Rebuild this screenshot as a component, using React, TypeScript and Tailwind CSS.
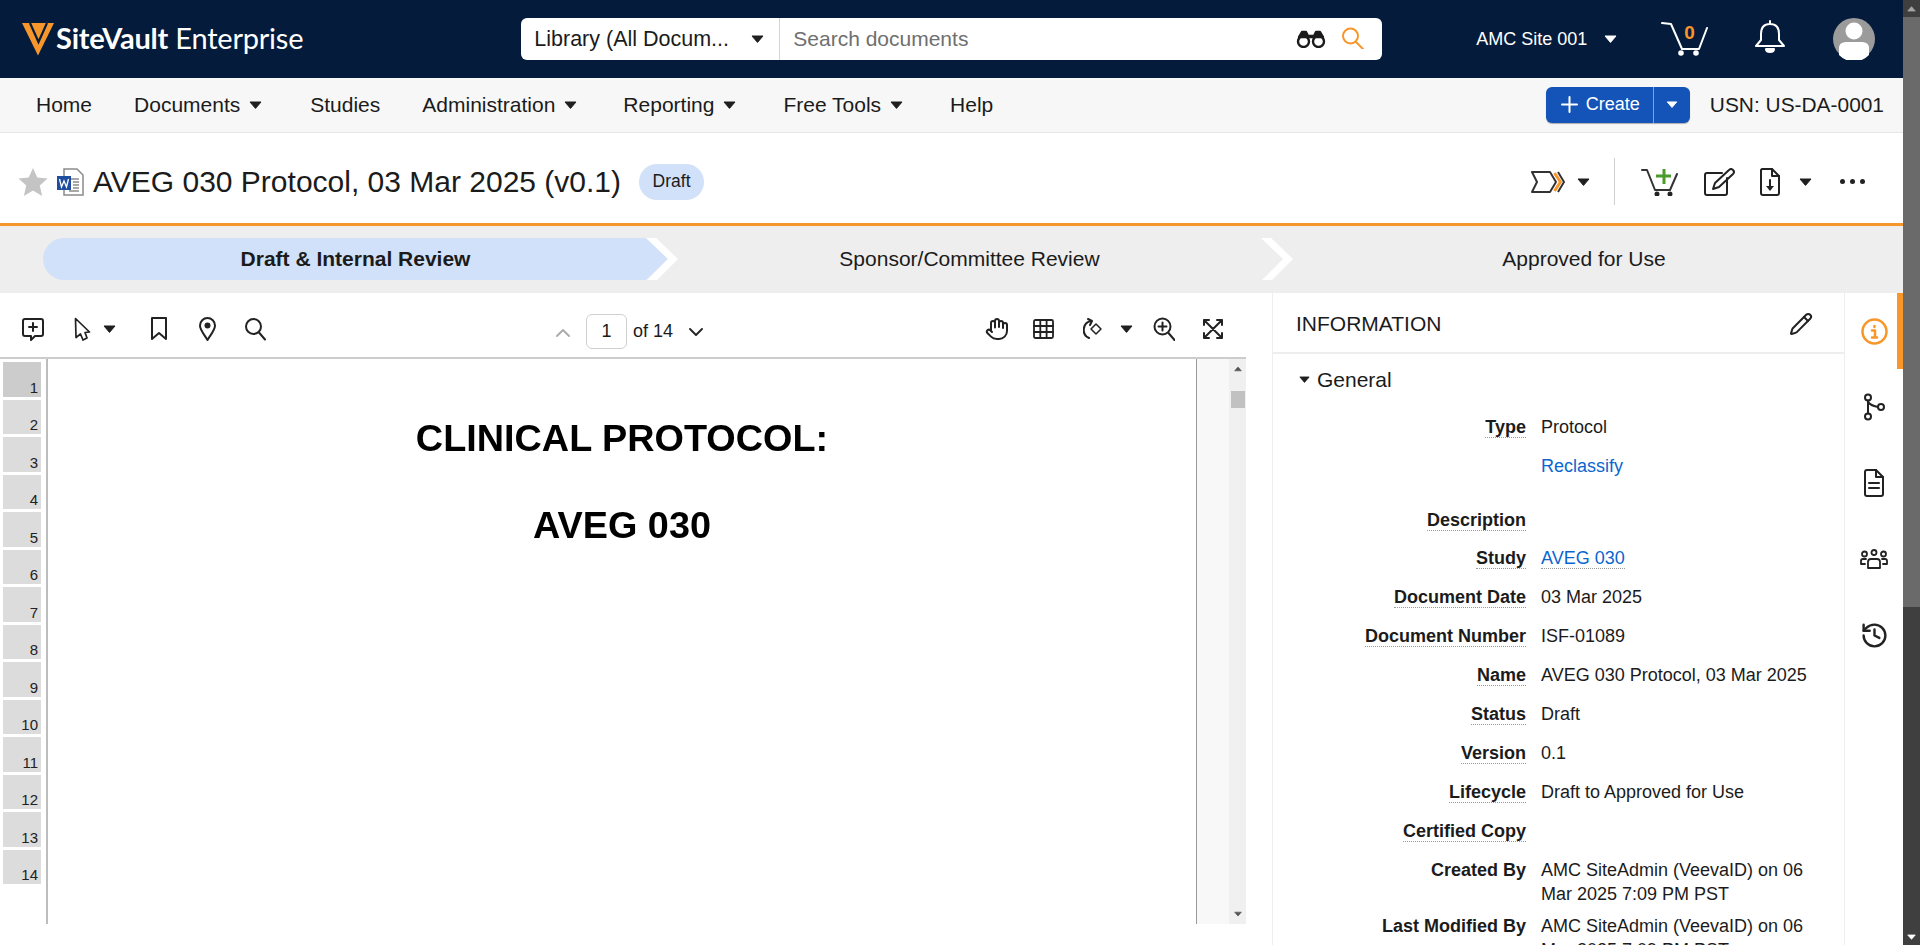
import React from "react";
import { Hand, History, Pencil } from "lucide-react";

const Caret = ({ c = "#1f1f1f", w = 13, h = 8, className = "" }: { c?: string; w?: number; h?: number; className?: string }) => (
  <svg width={w} height={h} viewBox="0 0 13 8" className={`shrink-0 ${className}`}>
    <path d="M1 1h11L6.5 7.4z" fill={c} stroke={c} strokeWidth="1" strokeLinejoin="round" />
  </svg>
);

const Ic = ({ w, h, children, sw = 2, c = "#222", className = "" }: { w: number; h: number; children: React.ReactNode; sw?: number; c?: string; className?: string }) => (
  <svg width={w} height={h} viewBox={`0 0 ${w} ${h}`} fill="none" stroke={c} strokeWidth={sw} strokeLinecap="round" strokeLinejoin="round" className={`shrink-0 ${className}`}>
    {children}
  </svg>
);

const Logo = () => (
  <svg width="33" height="33" viewBox="0 0 33 33" className="shrink-0">
    <path d="M0 0h32L16 32.5z" fill="#f7962b" />
    <path d="M8 0l8.500 19L25 0" fill="none" stroke="#051b3b" strokeWidth="2.200" />
  </svg>
);

const Chevron = ({ blue = false }: { blue?: boolean }) => (
  <svg width="32" height="42" viewBox="0 0 32 42" className="shrink-0">
    {blue && <path d="M0 0L22 21L0 42z" fill="#d1e1f9" />}
    <path d="M0 0h10l22 21-21 21H1l21-21z" fill="#fff" />
  </svg>
);

const Row = ({ label, children, u = true, pb = "pb-[15px]" }: { label?: string; children?: React.ReactNode; u?: boolean; pb?: string }) => (
  <div className={`flex ${pb}`}>
    <div className="w-[253px] flex justify-end pt-[2px] shrink-0">
      {label && (
        <span className={`block h-[21px] leading-[20px] font-bold ${u ? "border-b border-dotted border-[#999]" : ""}`}>{label}</span>
      )}
    </div>
    <div className="ml-[15px] w-[280px] leading-6">{children}</div>
  </div>
);

const navItems: [string, boolean, string][] = [
  ["Home", false, "ml-[36px]"],
  ["Documents", true, "ml-[42px]"],
  ["Studies", false, "ml-[48px]"],
  ["Administration", true, "ml-[42px]"],
  ["Reporting", true, "ml-[46px]"],
  ["Free Tools", true, "ml-[47px]"],
  ["Help", false, "ml-[47px]"],
];

const pages = Array.from({ length: 14 }, (_, i) => i + 1);

export default function App() {
  return (
    <div className="flex h-[945px] w-[1920px] overflow-hidden bg-white text-[#1b1b1b] font-['Liberation_Sans',Arial,sans-serif] text-[18px]">
      <div className="flex flex-col w-[1903px] shrink-0">
        {/* Header */}
        <header className="flex items-center h-[78px] bg-[#051b3b] shrink-0">
          <div className="ml-[22px] flex items-center">
            <Logo />
            <span className="ml-[1px] -mt-[3px] font-['Lato',sans-serif] text-[29px] leading-none text-white tracking-[-0.22px]">
              <span className="font-bold">SiteVault</span> <span className="font-normal">Enterprise</span>
            </span>
          </div>
          <div className="ml-[218px] flex h-[42px] w-[861px] rounded-[6px] bg-white">
            <div className="flex items-center w-[259px] border-r border-[#d5d5d5] pl-[13px] pr-[15px] text-[21.500px] justify-between">
              <span>Library (All Docum...</span>
              <Caret />
            </div>
            <div className="flex flex-1 items-center pl-[13px] pr-[18px]">
              <span className="flex-1 text-[21px] text-[#6f6f6f]">Search documents</span>
              <Ic w={30} h={18} sw={2.400} c="#1b1b1b">
                <circle cx="7.500" cy="11.500" r="5.500" />
                <circle cx="22.500" cy="11.500" r="5.500" />
                <path d="M3 7L6 2h4l2 4h6l2-4h4l3 5z" fill="#1b1b1b" />
              </Ic>
              <Ic w={23} h={22} sw={2} c="#f7962b" className="ml-[15px] -mt-[3px]">
                <circle cx="9.500" cy="9" r="7.500" />
                <path d="M15 15l7 7" />
              </Ic>
            </div>
          </div>
          <span className="ml-[94px] text-[18px] text-white">AMC Site 001</span>
          <Caret c="#fff" className="ml-[17px]" />
          <div className="relative ml-[44px] -mt-[2px]">
            <Ic w={48} h={36} c="#fff" sw={2}>
              <path d="M1 3l9 1 11 25h17l8-21" />
              <circle cx="20" cy="33" r="1.800" fill="#fff" />
              <circle cx="35" cy="33" r="1.800" fill="#fff" />
            </Ic>
            <span className="absolute left-[23px] top-[1px] text-[19px] font-bold text-[#f7962b] leading-[24px]">0</span>
          </div>
          <Ic w={32} h={34} c="#fff" sw={2} className="ml-[45px] -mt-[4px]">
            <path d="M16 1v3M16 4c-6 0-9 4-9 10v6l-5 6h28l-5-6v-6c0-6-3-10-9-10z" />
            <path d="M12 29h8c0 4-8 4-8 0z" fill="#fff" />
          </Ic>
          <svg width="42" height="42" viewBox="0 0 42 42" className="ml-[47px] shrink-0">
            <circle cx="21" cy="21" r="21" fill="#9b9b9b" />
            <circle cx="21" cy="13" r="8.500" fill="#fff" />
            <path d="M6 37v-7c0-4 3-6 8-6h14c5 0 8 2 8 6v7a21 21 0 0 1-30 0z" fill="#fff" />
          </svg>
        </header>

        {/* Nav */}
        <nav className="flex items-center h-[55px] shrink-0 bg-[#f7f7f7] border-b border-[#e6e6e6] text-[21px]">
          {navItems.map(([t, car, m]) => (
            <div key={t} className={`flex items-center gap-[9px] ${m}`}>
              <span>{t}</span>
              {car && <Caret />}
            </div>
          ))}
          <div className="ml-auto flex h-[36px] w-[144px] rounded-[6px] bg-[#1453b8] text-white -mt-[1px] shadow-[0_1px_1px_rgba(0,0,0,0.3)]">
            <div className="flex items-center flex-1 pl-[15px] gap-[8px] border-r border-[#7fa2dc]">
              <Ic w={17} h={17} c="#fff" sw={2}>
                <path d="M8.500 1v15M1 8.500h15" />
              </Ic>
              <span className="text-[18px]">Create</span>
            </div>
            <div className="flex items-center justify-center w-[36px]">
              <Caret c="#fff" w={12} h={7} />
            </div>
          </div>
          <span className="ml-[20px] mr-[19px] text-[20.900px]">USN: US-DA-0001</span>
        </nav>

        {/* Title */}
        <section className="flex items-center h-[90px] shrink-0 pt-[7px]">
          <svg width="30" height="28" viewBox="0 0 30 28" className="ml-[18px] shrink-0">
            <path d="M15 0l4.300 9.500 10.200 1-7.700 7 2.300 10.500L15 22.500 5.900 28l2.300-10.500-7.700-7 10.200-1z" fill="#c4c4c4" />
          </svg>
          <svg width="27" height="28" viewBox="0 0 27 28" className="ml-[9px] shrink-0">
            <path d="M7 1h13l6 6v20H7z" fill="#fff" stroke="#8c8c8c" strokeWidth="1.500" />
            <path d="M12 11h10M16 14h6M16 17h6M16 20h6M12 23h10" stroke="#8c8c8c" strokeWidth="1.500" />
            <rect x="0" y="8" width="14" height="14" fill="#1f4e9e" />
            <path d="M2.500 11l2 8 2.500-6 2.500 6 2-8" stroke="#fff" strokeWidth="1.300" fill="none" />
          </svg>
          <h1 className="ml-[9px] text-[30px] font-normal leading-none">AVEG 030 Protocol, 03 Mar 2025 (v0.1)</h1>
          <span className="ml-[18px] flex items-center justify-center h-[36px] w-[65px] rounded-[18px] bg-[#d1e1f9] text-[17.500px]">Draft</span>
          <div className="ml-auto flex items-center">
            <svg width="34" height="22" viewBox="0 0 34 22" fill="none" strokeWidth="2" strokeLinejoin="round" className="shrink-0">
              <path d="M1 1h18l6 10-6 10H1l5-10z" stroke="#333" fill="#fff" />
              <path d="M23.500 2l6 9-6 9" stroke="#f7962b" strokeWidth="3" />
              <path d="M27 1l6 10-6 10" stroke="#333" />
            </svg>
            <Caret className="ml-[12px]" />
            <div className="ml-[24px] w-px h-[47px] bg-[#cfcfcf]" />
            <Ic w={40} h={28} className="ml-[26px]" sw={2}>
              <path d="M1 2h5l8 20h15l7-16" stroke="#333" />
              <path d="M23 1v15M15 8h15" stroke="#4a9a2c" strokeWidth="3" strokeLinecap="butt" />
              <circle cx="16" cy="26" r="1.500" fill="#222" />
              <circle cx="29" cy="26" r="1.500" fill="#222" />
            </Ic>
            <Ic w={31} h={28} className="ml-[23px]" sw={2}>
              <path d="M23 10v15a2 2 0 0 1-2 2H3a2 2 0 0 1-2-2V7a2 2 0 0 1 2-2h15" />
              <path d="M9 21l2-6L25 2a2.500 2.500 0 0 1 4 4L15 19z" />
            </Ic>
            <Ic w={20} h={28} className="ml-[25px]" sw={2}>
              <path d="M2 1h10l7 7v17a2 2 0 0 1-2 2H3a2 2 0 0 1-2-2V2z" />
              <path d="M12 1v7h7M10 12v9" />
              <path d="M6 18h8l-4 5z" fill="#222" stroke="none" />
            </Ic>
            <Caret className="ml-[19px]" />
            <div className="ml-[28px] mr-[38px] flex gap-[5px]">
              <span className="w-[5px] h-[5px] rounded-full bg-[#222]" />
              <span className="w-[5px] h-[5px] rounded-full bg-[#222]" />
              <span className="w-[5px] h-[5px] rounded-full bg-[#222]" />
            </div>
          </div>
        </section>

        {/* Stages */}
        <div className="flex items-center h-[70px] shrink-0 border-t-[3px] border-[#f7962b] bg-[#eeeeee] pl-[43px] pr-[28px] pb-[1px] text-[21px]">
          <div className="w-[603px] h-[42px] flex items-center justify-center pl-[22px] rounded-l-full bg-[#d1e1f9] font-bold shrink-0">Draft &amp; Internal Review</div>
          <Chevron blue />
          <div className="w-[583px] text-center shrink-0">Sponsor/Committee Review</div>
          <Chevron />
          <div className="flex-1 text-center">Approved for Use</div>
        </div>

        {/* Body */}
        <div className="flex flex-1 min-h-0">
          {/* Viewer */}
          <div className="flex flex-col w-[1246px] shrink-0 pb-[21px]">
            <div className="flex items-center h-[66px] shrink-0 border-b-2 border-[#cccccc] pt-[10px]">
              <Ic w={22} h={24} className="ml-[22px] -mt-[2px]">
                <path d="M3 2h16a2 2 0 0 1 2 2v13a2 2 0 0 1-2 2h-6l-4 4v-4H3a2 2 0 0 1-2-2V4a2 2 0 0 1 2-2z" />
                <path d="M11 6v8M7 10h8" />
              </Ic>
              <Ic w={17} h={24} className="ml-[30px] -mt-[2px]" sw={1.700}>
                <path d="M1.500 1.500L15.500 15l-4.500.5 2 5.500-4 2-2.500-6L2 20.500z" />
              </Ic>
              <Caret className="ml-[12px] -mt-[2px]" />
              <Ic w={18} h={24} className="ml-[34px] -mt-[2px]">
                <path d="M2 1h14v21l-7-6-7 6z" />
              </Ic>
              <Ic w={17} h={24} className="ml-[31px] -mt-[2px]">
                <path d="M8.500 23C5 17 1 13 1 8.500a7.500 7.500 0 0 1 15 0C16 13 12 17 8.500 23z" />
                <circle cx="8.500" cy="8.500" r="3" fill="#222" stroke="none" />
              </Ic>
              <Ic w={22} h={24} className="ml-[28px] -mt-[2px]">
                <circle cx="9.500" cy="9.500" r="7.500" />
                <path d="M15 15.500l6 7" />
              </Ic>
              <Ic w={14} h={9} c="#aaaaaa" className="ml-[290px] mt-[4px]" sw={1.800}>
                <path d="M1 8l6-6 6 6" />
              </Ic>
              <div className="ml-[16px] flex items-center justify-center h-[35px] w-[41px] rounded-[6px] border border-[#d0d0d0] text-[18px] mt-[3px]">1</div>
              <span className="ml-[6px] text-[18px] mt-[3px]">of 14</span>
              <Ic w={14} h={9} c="#222" className="ml-[16px] mt-[4px]" sw={1.800}>
                <path d="M1 1l6 6 6-6" />
              </Ic>
              <Hand size={24} strokeWidth={2} className="ml-[282px] -mt-[2px] shrink-0 text-[#222]" />
              <Ic w={21} h={20} className="ml-[24px] -mt-[2px]" sw={1.800}>
                <rect x="1" y="1" width="19" height="18" rx="1.500" />
                <path d="M1 7h19M1 13h19M7.300 1v18M13.600 1v18" />
              </Ic>
              <Ic w={20} h={24} className="ml-[29px] -mt-[2px]">
                <path d="M8 4a9 9 0 0 0-2 17" />
                <path d="M5 2l4 2-2 4" />
                <path d="M13 7l5 5-5 5-5-5z" strokeWidth="1.500" />
              </Ic>
              <Caret className="ml-[17px] -mt-[2px]" />
              <Ic w={22} h={24} className="ml-[20px] -mt-[2px]">
                <circle cx="9.500" cy="9.500" r="8" />
                <path d="M15.500 16l6 7M9.500 5.500v8M5.500 9.500h8" />
              </Ic>
              <Ic w={20} h={20} className="ml-[28px] -mt-[2px]">
                <path d="M1 6V1h5M19 6V1h-5M1 14v5h5M19 14v5h-5M1 1l18 18M19 1L1 19" />
              </Ic>
            </div>
            <div className="flex flex-1 min-h-0">
              <div className="w-[48px] shrink-0 border-r-2 border-[#bdbdbd] pl-[3px] pr-[5px] pt-[3px] flex flex-col gap-[3px]">
                {pages.map((p) => (
                  <div key={p} className={`h-[34.500px] flex items-end justify-end pr-[3px] text-[15px] leading-[18px] text-[#222] ${p === 1 ? "bg-[#cccccc]" : "bg-[#dcdcdc]"}`}>
                    {p}
                  </div>
                ))}
              </div>
              <div className="w-[1149px] shrink-0 border-r border-[#999] flex flex-col items-center pt-[55px] font-bold text-[37.800px] leading-[48px] text-black blur-[0.5px]">
                <div>CLINICAL PROTOCOL:</div>
                <div className="mt-[39px]">AVEG 030</div>
              </div>
              <div className="flex-1 bg-[#f8f8f8]" />
              <div className="w-[17px] shrink-0 bg-[#f0f0f0] flex flex-col items-center justify-between py-[7px] relative">
                <Caret c="#555" w={8} h={6} className="rotate-180" />
                <div className="absolute left-[2px] top-[32px] w-[14px] h-[17px] bg-[#c1c1c1]" />
                <Caret c="#555" w={8} h={6} />
              </div>
            </div>
          </div>
          <div className="w-[26px] shrink-0" />

          {/* Info */}
          <div className="w-[573px] shrink-0 border-l border-r border-[#eeeeee] overflow-hidden flex flex-col">
            <div className="flex items-center h-[61px] shrink-0 border-b-2 border-[#eeeeee] pl-[23px] pr-[31px]">
              <span className="flex-1 text-[21px] mt-[2px]">INFORMATION</span>
              <Pencil size={24} strokeWidth={2} className="text-[#222] mt-[2px]" />
            </div>
            <div className="flex items-center h-[50px] shrink-0 pl-[26px] gap-[7px] text-[21px]">
              <Caret w={11} h={7} />
              <span className="mt-[1px]">General</span>
            </div>
            <div className="pt-[11px]">
              <Row label="Type">Protocol</Row>
              <Row pb="pb-[30px]"><span className="text-[#0b66cf]">Reclassify</span></Row>
              <Row label="Description" />
              <Row label="Study"><span className="inline-block h-[21px] leading-[20px] mt-[2px] text-[#0b66cf] border-b border-dotted border-[#999]">AVEG 030</span></Row>
              <Row label="Document Date">03 Mar 2025</Row>
              <Row label="Document Number">ISF-01089</Row>
              <Row label="Name">AVEG 030 Protocol, 03 Mar 2025</Row>
              <Row label="Status">Draft</Row>
              <Row label="Version">0.1</Row>
              <Row label="Lifecycle">Draft to Approved for Use</Row>
              <Row label="Certified Copy" pb="pb-[16px]" />
              <Row label="Created By" u={false} pb="pb-2">AMC SiteAdmin (VeevaID) on 06 Mar 2025 7:09 PM PST</Row>
              <Row label="Last Modified By" u={false}>AMC SiteAdmin (VeevaID) on 06 Mar 2025 7:09 PM PST</Row>
            </div>
          </div>

          {/* Rail */}
          <div className="flex-1 flex flex-col">
            <div className="h-[76px] flex items-center justify-center border-r-[6px] border-[#f7962b] pl-[6px]">
              <Ic w={27} h={27} c="#f7962b" sw={2.500}>
                <circle cx="13.500" cy="13.500" r="12" />
                <path d="M13.500 8v1M11 12.500h3v7M11 19.500h5" />
              </Ic>
            </div>
            <div className="h-[76px] flex items-center justify-center">
              <Ic w={22} h={28} sw={2}>
                <circle cx="5" cy="4.500" r="3" />
                <circle cx="5" cy="23.500" r="3" />
                <circle cx="18" cy="14" r="3" />
                <path d="M5 7.500v13M5 8c1 4 5 5 10 6" />
              </Ic>
            </div>
            <div className="h-[76px] flex items-center justify-center">
              <Ic w={20} h={28} sw={2}>
                <path d="M3 1h9l7 7v17a2 2 0 0 1-2 2H3a2 2 0 0 1-2-2V3a2 2 0 0 1 2-2z" />
                <path d="M12 1v7h7M5 14h10M5 19h10" />
              </Ic>
            </div>
            <div className="h-[76px] flex items-center justify-center">
              <Ic w={28} h={20} sw={1.800}>
                <circle cx="14" cy="3.500" r="2.500" />
                <circle cx="4.500" cy="5" r="2.500" />
                <circle cx="23.500" cy="5" r="2.500" />
                <path d="M8 19v-6a3 3 0 0 1 3-3h6a3 3 0 0 1 3 3v6zM5 15H1v-3a2 2 0 0 1 2-2h3M23 15h4v-3a2 2 0 0 0-2-2h-3" />
              </Ic>
            </div>
            <div className="h-[76px] flex items-center justify-center">
              <History size={29} strokeWidth={2} className="text-[#222]" />
            </div>
          </div>
        </div>
      </div>

      {/* Page scrollbar */}
      <div className="w-[17px] shrink-0 flex flex-col items-center bg-[#3f3f3f]">
        <div className="h-[17px] shrink-0 flex items-center justify-center">
          <Caret c="#a8a8a8" w={9} h={6} className="rotate-180" />
        </div>
        <div className="h-[590px] w-full shrink-0 bg-[#6a6a6a]" />
        <div className="mt-auto h-[17px] flex items-center justify-center">
          <Caret c="#ffffff" w={9} h={6} />
        </div>
      </div>
    </div>
  );
}
